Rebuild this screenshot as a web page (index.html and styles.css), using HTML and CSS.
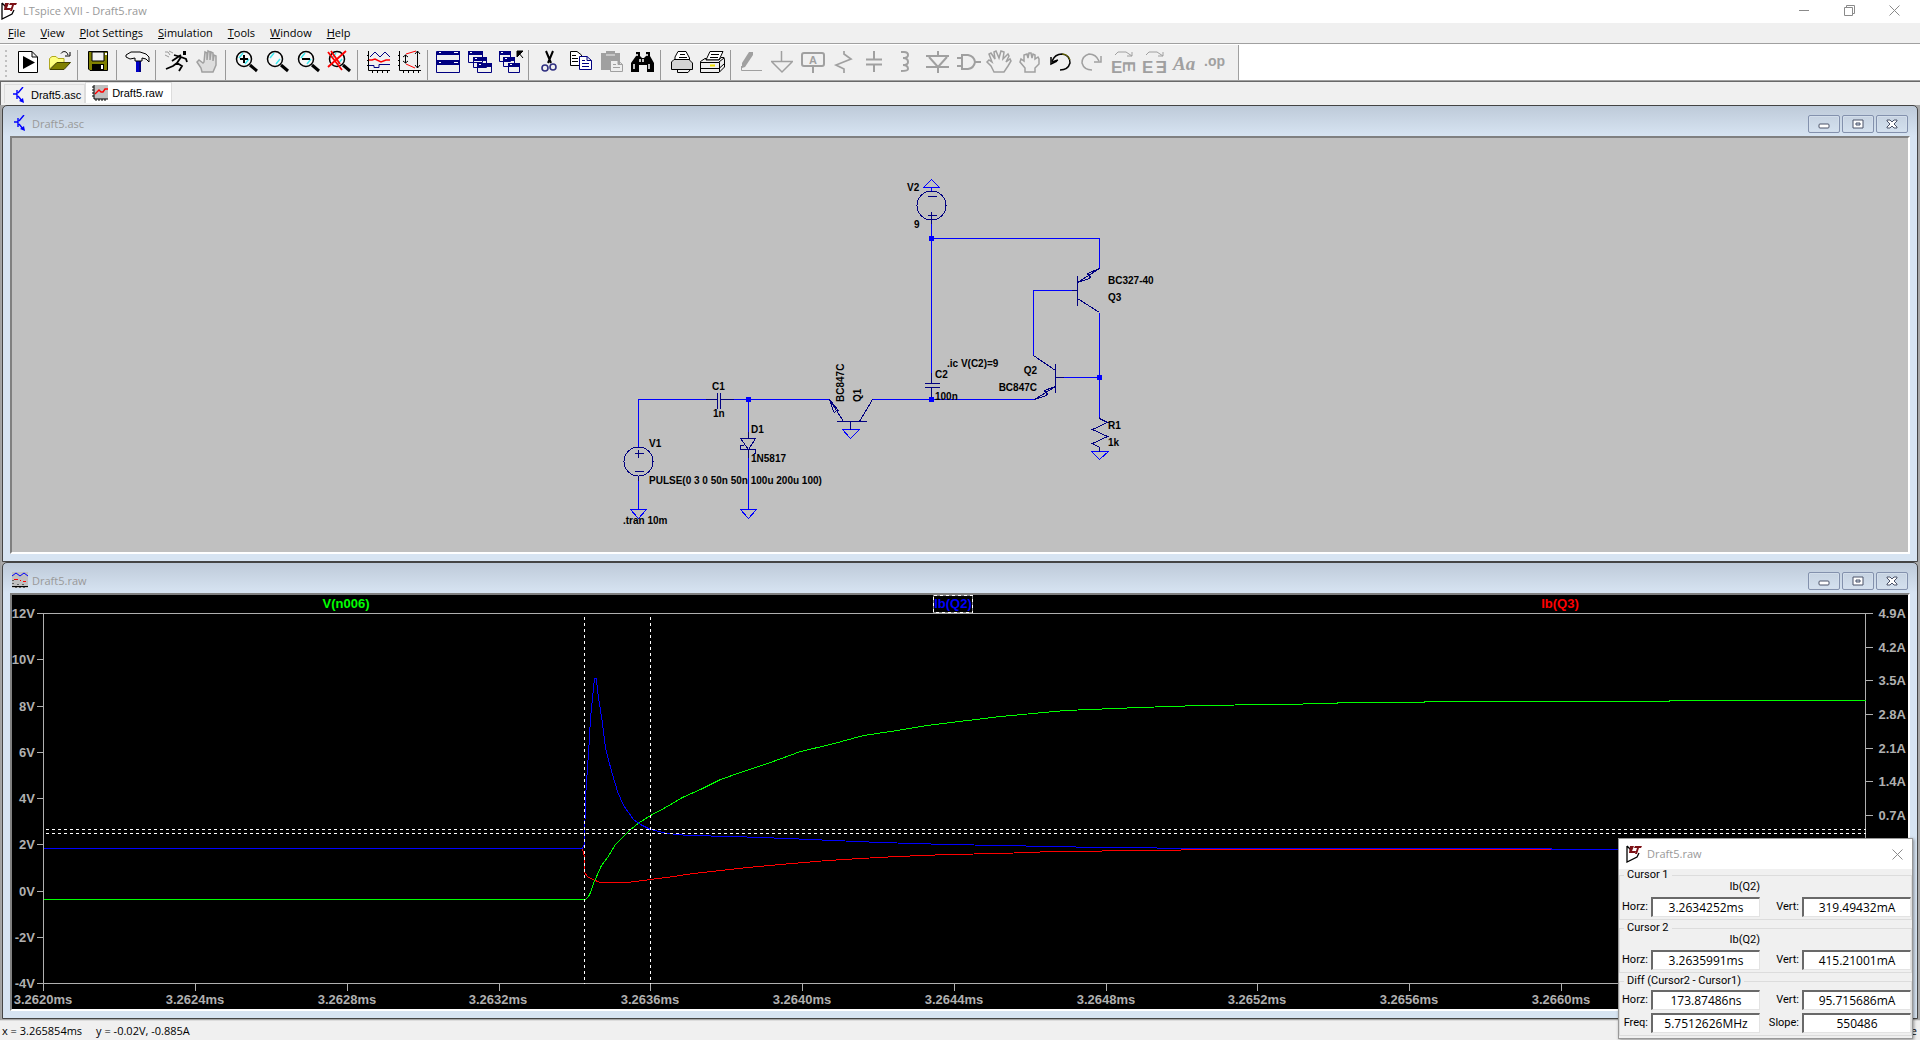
FILE: index.html
```html
<!DOCTYPE html>
<html lang="en">
  <head>
    <meta charset="utf-8" />
    <title>LTspice XVII - Draft5.raw</title>
    <link rel="stylesheet" href="styles.css">
  </head>

  <body>
    <svg class="defs" width="0" height="0" aria-hidden="true">
      <symbol id="logo" viewBox="0 0 16 18">
        <path d="M1 1V17L11 12L13 8M1 1L5 5" fill="none" stroke="#000" stroke-width="1.3" />
        <path d="M4 1H8L6 6H10L9 8H3ZM9 1H16L15 3H13L11 9H9L11 3H8Z" fill="#7b1015" />
      </symbol>
      <symbol id="npn" viewBox="0 0 16 16">
        <path d="M2 7H6M6 3V12M7 6L12 0M7 9L11 14" fill="none" stroke="#00f" stroke-width="1.4" />
        <path d="M13 16L8 14L12 11Z" fill="#00f" />
      </symbol>
      <symbol id="wave" viewBox="0 0 16 16">
        <path d="M2 0H16V14H2Z" fill="#c0c0c0" />
        <path d="M2 0V14H16M0 2H2M0 5H2M0 8H2M0 11H2M4 14V16M7 14V16M10 14V16M13 14V16" fill="none" stroke="#000" />
        <path d="M3 9L7 5L9 7H11L13 4H16" fill="none" stroke="red" stroke-width="1.4" />
      </symbol>
      <symbol id="waves" viewBox="0 0 16 16">
        <path d="M0 0H16V16H0Z" fill="#c0c0c0" />
        <path d="M0 4L4 1L8 4L12 1L16 4" fill="none" stroke="#00f" />
        <path d="M2 7.500H6M8 8.500H9M11 9.500H14" stroke="red" />
        <path d="M0 14.500H16M4 14V16M8 14V16M12 14V16M1 8V9M1 11V12M6 12V13M11 12V13" stroke="#000" />
      </symbol>
      <symbol id="lens" viewBox="0 0 24 24">
        <circle cx="9" cy="9" r="7.500" fill="#f8f8f8" stroke="#000" stroke-width="1.500" />
        <path d="M4 8L8 3M10 14L14 9" stroke="#3fe8f0" stroke-width="1.500" />
        <path d="M15 15L22 21" stroke="#000" stroke-width="3" />
      </symbol>
      <symbol id="min" viewBox="0 0 12 10">
        <rect x="1" y="5" width="10" height="4" rx="1" fill="#fff" stroke="#4b5268" />
      </symbol>
      <symbol id="max" viewBox="0 0 12 10">
        <path d="M1 1H11V9H1ZM4 4V6H8V4Z" fill="#fff" fill-rule="evenodd" stroke="#4b5268" />
      </symbol>
      <symbol id="cross" viewBox="0 0 12 10">
        <path d="M1 1H4L6 3L8 1H11V2L8 5L11 8V9H8L6 7L4 9H1V8L4 5L1 2Z" fill="#fff" stroke="#4b5268" />
      </symbol>
      <symbol id="x" viewBox="0 0 11 11">
        <path d="M.5.5L10.500 10.500M10.500.5L.5 10.500" stroke="#8a8a8a" fill="none" />
      </symbol>
    </svg>

    <header class="titlebar">
      <svg class="logo"><use href="#logo" /></svg>
      <h1>LTspice XVII - Draft5.raw</h1>
      <div class="syscmds">
        <button aria-label="Minimize"><svg width="11" height="11"><path d="M0 5.500H10" stroke="#8a8a8a" /></svg></button>
        <button aria-label="Restore"><svg width="11" height="11"><path d="M.5 2.500H8.500V10.500H.5ZM2.500 2V.5H10.500V8.500H9" stroke="#8a8a8a" fill="none" /></svg></button>
        <button aria-label="Close"><svg width="11" height="11"><use href="#x" /></svg></button>
      </div>
    </header>

    <nav class="menubar">
      <a href="#"><u>F</u>ile</a>
      <a href="#"><u>V</u>iew</a>
      <a href="#"><u>P</u>lot Settings</a>
      <a href="#"><u>S</u>imulation</a>
      <a href="#"><u>T</u>ools</a>
      <a href="#"><u>W</u>indow</a>
      <a href="#"><u>H</u>elp</a>
    </nav>

    <div class="rebar">
      <div class="toolbar">
        <button class="tool" aria-label="Run"><svg viewBox="0 0 24 24"><path d="M1.500 1.500H15L20.500 7V22.500H1.500ZM15 1.500V7H20.500" fill="#fff" stroke="#000" /><path d="M6 6L18 12.500L6 19Z" /></svg></button>
        <button class="tool" aria-label="Open"><svg viewBox="0 0 24 24"><path d="M1.500 19V8.500L4 6.500H8L10 8.500H16V13H8Z" fill="#ffff80" stroke="#b0a820" /><path d="M2 19.500L9 12.500H22.500L16 19.500Z" fill="#808000" stroke="#404000" /><path d="M13 3.500C15 .5 19 1 20 5M22 2V6H17" fill="none" stroke="#000" /></svg></button>
        <span class="sep"></span>
        <button class="tool" aria-label="Save"><svg viewBox="0 0 24 24"><path d="M1.500 1.500H20.500V20.500H3L1.500 19Z" fill="#808000" stroke="#000" /><path d="M5 2H17V11H5Z" fill="#f0f0f0" stroke="#000" /><path d="M5 14H17V20H5Z" /><path d="M14 15H16V19H14ZM18 3H20V5H18Z" fill="#fff" /></svg></button>
        <span class="sep"></span>
        <button class="tool" aria-label="Control panel"><svg viewBox="0 0 24 24"><path d="M10 10H15V22H10Z" fill="#0000c8" /><path d="M14 10V22" stroke="#000080" stroke-width="2" /><path d="M0 5L5 2H14L20 4L23 7V12L20 9L16 8V11H9V8L4 9L0 7Z" fill="#f4f4f4" stroke="#000" /></svg></button>
        <span class="sep"></span>
        <button class="tool" aria-label="Simulate"><svg viewBox="0 0 24 24"><path d="M18 1H21V5H18Z" /><path d="M9 5L16 7L21 9L22 12M16 7L12 13L17 16L14 21M12 13L8 16L1 19M16 5L10 9L7 11" fill="none" stroke="#000" stroke-width="1.800" /><path d="M0 2H3L5 5M4 1L8 3M0 5L4 7" fill="none" stroke="#999" /></svg></button>
        <button class="tool" aria-label="Halt"><svg viewBox="0 0 24 24"><path d="M6 22H17L20 15V6L18 5L17 11V3L15 2L14 10V2L12 1L11 10V3L9 2L8 12L7 13L3 10L1 12L5 18Z" fill="#ddd" stroke="#a0a0a0" stroke-width="1.500" /></svg></button>
        <span class="sep"></span>
        <button class="tool" aria-label="Zoom in"><svg viewBox="0 0 24 24"><use href="#lens" /><path d="M5 9H13M9 5V13" stroke="#000" stroke-width="2" /></svg></button>
        <button class="tool" aria-label="Pan"><svg viewBox="0 0 24 24"><use href="#lens" /></svg></button>
        <button class="tool" aria-label="Zoom out"><svg viewBox="0 0 24 24"><use href="#lens" /><path d="M5 9H13" stroke="#000" stroke-width="2" /></svg></button>
        <button class="tool" aria-label="Zoom full extents"><svg viewBox="0 0 24 24"><use href="#lens" /><path d="M0 2L14 20M18 1L0 17M3 1L12 14" fill="none" stroke="red" stroke-width="1.800" /></svg></button>
        <span class="sep"></span>
        <button class="tool" aria-label="Autorange"><svg viewBox="0 0 24 24"><path d="M1.500 1V20.500H23M0 5.500H1M0 10.500H1M0 15.500H1M5.500 21V23M10.500 21V23M15.500 21V23M20.500 21V23" fill="none" stroke="#000" /><path d="M3 7L8 2L13 7L18 2L23 7M2 15.500H7V17.500H12V14.500H23" fill="none" stroke="#000080" /><path d="M2 10H5L8 9L14 12L19 10H23" fill="none" stroke="red" stroke-width="1.500" /></svg></button>
        <button class="tool" aria-label="Plot limits"><svg viewBox="0 0 24 24"><path d="M1.500 1V20.500H23M0 5.500H1M0 10.500H1M0 15.500H1M5.500 21V23M10.500 21V23M15.500 21V23M20.500 21V23M7.500 5V13M5 7L7.500 5L10 7M5 11L7.500 13L10 11M19.500 1V18M17 4L19.500 1L22 4M17 15L19.500 18L22 15" fill="none" stroke="#000" /><path d="M8 4L18 1M8 14L17 18" stroke="red" /></svg></button>
        <span class="sep"></span>
        <button class="tool" aria-label="Tile windows"><svg viewBox="0 0 24 24"><path d="M-.5 1.500H22.500V22.500H-.5Z" fill="#f0f0f0" stroke="#000080" /><path d="M0 1H23V5H0ZM0 11H23V15H0Z" fill="#000080" /><path d="M0 10.500H22" stroke="#000080" /><path d="M2 2.500H4M17 2.500H21M2 12.500H4M17 12.500H21" stroke="#fff" /></svg></button>
        <button class="tool" aria-label="Cascade windows"><svg viewBox="0 0 24 24"><g fill="#f0f0f0" stroke="#000080"><path d="M.5 1.500H14.500V12.500H.5ZM5.500 8.500H18.500V17.500H5.500ZM9.500 13.500H23.500V22.500H9.500Z" /></g><path d="M0 1H15V5H0ZM5 7H19V11H5ZM9 13H24V17H9Z" fill="#000080" /><path d="M2 2.500H4M7 8.500H9M11 14.500H13" stroke="#fff" /></svg></button>
        <button class="tool" aria-label="Close all windows"><svg viewBox="0 0 24 24"><g fill="#f0f0f0" stroke="#000080"><path d="M.5 1.500H11.500V11.500H.5ZM4.500 7.500H15.500V16.500H4.500ZM9.500 13.500H20.500V22.500H9.500Z" /></g><path d="M0 1H12V5H0ZM4 7H16V11H4ZM9 13H21V17H9Z" fill="#000080" /><path d="M2 2.500H4M6 8.500H8M11 14.500H13" stroke="#fff" /><path d="M18 7V1H24ZM19 2L24 8" stroke="#000" /></svg></button>
        <span class="sep"></span>
        <button class="tool" aria-label="Cut"><svg viewBox="0 0 24 24"><path d="M8 1L13 13M15 1L10 13" stroke="#000" stroke-width="2" /><circle cx="7" cy="18" r="3" fill="none" stroke="#303080" stroke-width="1.600" /><circle cx="15" cy="17" r="3" fill="none" stroke="#303080" stroke-width="1.600" /></svg></button>
        <button class="tool" aria-label="Copy"><svg viewBox="0 0 24 24"><path d="M1.500 1.500H8L12.500 5V15.500H1.500Z" fill="#fff" stroke="#000" /><path d="M3 5.500H7M3 8.500H9M3 11.500H9" stroke="#000" /><path d="M10.500 6.500H18L22.500 10.500V19.500H10.500ZM18 6.500V10.500H22.500" fill="#fff" stroke="#000080" /><path d="M13 10.500H16M13 13.500H20M13 16.500H20" stroke="#000080" /></svg></button>
        <button class="tool" aria-label="Paste"><svg viewBox="0 0 24 24"><path d="M1 3H6V1H15V3H20V20H1Z" fill="#a0a0a0" /><path d="M6 5H15" stroke="#eee" /><path d="M10.500 10.500H18L22.500 14.500V21.500H10.500ZM18 10.500V14.500H22.500M13 14.500H16M13 17.500H20" fill="#eee" stroke="#a0a0a0" /></svg></button>
        <button class="tool" aria-label="Find"><svg viewBox="0 0 24 24"><path d="M5 2H9V6L11 8H13L15 6V2H19V6L23 13V22H16V15H8V22H0V13L5 6Z" /><path d="M6 4V6M16 4V6M3 14V19M18 14V19M9 9V12M12 9V12" stroke="#fff" stroke-width="1.500" /></svg></button>
        <span class="sep"></span>
        <button class="tool" aria-label="Print"><svg viewBox="0 0 24 24"><path d="M5 9V7L8 1.500H16L19.500 8V10" fill="#fff" stroke="#000" /><path d="M4 9.500H19L22.500 13V19.500H1.500V12Z" fill="#d4d4d4" stroke="#000" /><path d="M7.500 20V22.500H18L20 20M10 4.500H15M9 7.500H17" fill="none" stroke="#000" /></svg></button>
        <button class="tool" aria-label="Print setup"><svg viewBox="0 0 24 24"><path d="M5 10L9 1.500H22L18 10Z" fill="#fff" stroke="#000" /><path d="M10 4.500H18M9 7.500H17" stroke="#000" /><path d="M-.5 11.500L4 8.500H5V10H18L20 7.500H23L23.500 10V17L18 22.500H-.5ZM-.5 12.500H18.500V22M18 12L23 8M0 18.500H18L23 14" fill="#eee" stroke="#000" /><path d="M9 15.500H14" stroke="#f0e000" stroke-width="2" /></svg></button>
        <span class="sep"></span>
        <button class="tool" aria-label="Wire" disabled><svg viewBox="0 0 24 24"><path d="M9 2H13V5L5 17L2 18V13Z" fill="#a0a0a0" /><path d="M1.500 16V20.500H22" class="line" /></svg></button>
        <button class="tool" aria-label="Ground" disabled><svg viewBox="0 0 24 24"><path d="M10.500 1V11M0 11.500H22M1 12L11 22L21 12" class="line" stroke-width="1.500" /></svg></button>
        <button class="tool" aria-label="Label net" disabled><svg viewBox="0 0 24 24"><rect x="0" y="3" width="22" height="13" rx="2" class="line" stroke-width="2" /><path d="M11 17V23" class="line" stroke-width="2" /><text x="7" y="14" class="sans" font-size="11">A</text></svg></button>
        <button class="tool" aria-label="Resistor" disabled><svg viewBox="0 0 24 24"><path d="M11 1V4L18 9L3 15L11 19V23" class="line" stroke-width="1.700" /></svg></button>
        <button class="tool" aria-label="Capacitor" disabled><svg viewBox="0 0 24 24"><path d="M10 1V9M10 15V22M2 9.500H18M2 14.500H18" class="line" stroke-width="2" /></svg></button>
        <button class="tool" aria-label="Inductor" disabled><svg viewBox="0 0 24 24"><path d="M6 2H9Q13 2 13 5Q13 8 8 8Q13 8 13 12Q13 15 8 15Q13 15 13 19Q13 21 6 21" class="line" stroke-width="2" /></svg></button>
        <button class="tool" aria-label="Diode" disabled><svg viewBox="0 0 24 24"><path d="M12 1V6M0 6H23M3 7L12 17L21 7M0 17H23M12 17V23" class="line" stroke-width="2" /></svg></button>
        <button class="tool" aria-label="Component" disabled><svg viewBox="0 0 24 24"><path d="M5 5H11Q17 6 18 12Q17 18 11 19H5ZM0 8H5M0 16H5M18 12H24" class="line" stroke-width="2" /></svg></button>
        <button class="tool" aria-label="Move" disabled><svg viewBox="0 0 24 24"><path d="M6 22L3 16L-1 12L1 10L4 12L1 4L3 3L7 9L6 2L8 1L11 8L13 1L16 2L15 9L20 4L21 6L18 12L22 9L23 11L20 16L16 22Z" class="line" stroke-width="1.500" /></svg></button>
        <button class="tool" aria-label="Drag" disabled><svg viewBox="0 0 24 24"><path d="M6 22V18L1 12L2 9L5 11V5L8 4L9 8L10 3H12L13 8L14 4L16 5V9L19 7L20 9V14L16 18V22Z" class="line" stroke-width="1.500" /></svg></button>
        <button class="tool" aria-label="Undo"><svg viewBox="0 0 24 24"><path d="M2 11Q5 4 12 4Q20 5 20 13Q18 20 10 20" fill="none" stroke="#000" stroke-width="1.500" /><path d="M12 4Q18 4 20 10" fill="none" stroke="#808000" /><path d="M1 7V14L7 11M2 12L8 10" fill="none" stroke="#000" stroke-width="1.500" /></svg></button>
        <button class="tool" aria-label="Redo" disabled><svg viewBox="0 0 24 24"><path d="M18 11Q15 4 8 4Q1 6 1 13Q3 20 11 20M20 6V12H13" class="line" stroke-width="1.500" /></svg></button>
        <button class="tool" aria-label="Rotate" disabled><svg viewBox="0 0 24 24"><path d="M3 5L6 2H14L20 6M20 2V6H15" class="line" /><text x="-1" y="23" class="sans" font-size="17">E</text><text class="sans" font-size="17" transform="translate(11 11) rotate(90)">E</text></svg></button>
        <button class="tool" aria-label="Mirror" disabled><svg viewBox="0 0 24 24"><path d="M3 5L6 2H14L20 6M20 2V6H15" class="line" /><text x="-1" y="23" class="sans" font-size="17">E</text><text class="sans" font-size="17" transform="translate(24 11) rotate(180)">E</text></svg></button>
        <button class="tool" aria-label="Text" disabled><svg viewBox="0 0 24 24"><text x="-1" y="20" class="serif" font-size="19">Aa</text></svg></button>
        <button class="tool" aria-label="SPICE directive" disabled><svg viewBox="0 0 24 24"><text x="-1" y="16" class="sans" font-size="14">.op</text></svg></button>
      </div>
    </div>

    <div class="tabs">
      <button class="tab"><svg><use href="#npn" /></svg>Draft5.asc</button>
      <button class="tab active"><svg><use href="#wave" /></svg>Draft5.raw</button>
    </div>

    <main class="mdi">
      <section class="child">
        <header>
          <svg class="doc"><use href="#npn" /></svg>
          <h2>Draft5.asc</h2>
          <button aria-label="Minimize Draft5.asc"><svg><use href="#min" /></svg></button>
          <button aria-label="Maximize Draft5.asc"><svg><use href="#max" /></svg></button>
          <button aria-label="Close Draft5.asc"><svg><use href="#cross" /></svg></button>
        </header>
        <div class="view">
          <svg class="schematic" viewBox="12 138 1896 414">
            <g transform="translate(.5 .5)" fill="none" shape-rendering="crispEdges">
              <!-- wires and grounds -->
              <g stroke="#00f">
                <path d="M638 447V399H717M720 399H828M872 399H1034M748 399V438M748 449V509M638 476V509M931 223V383M931 238H1099V268M1077 290H1033V355M1055 377H1099M1099 312V417M850 421V429M931 187V191" />
                <path d="M630 509H646L638 518ZM740 509H756L748 518ZM842 429H859L850 438ZM923 187H939L931 179ZM1091 451H1108L1099 459Z" />
              </g>
              <!-- parts -->
              <g stroke="#000080">
                <circle cx="638" cy="461" r="14.500" />
                <path d="M634 453H643M638 449V457M634 471H643M638 476V480" />
                <path d="M705 399H717M717 392V408M720 392V408M720 399H733" />
                <path d="M740 438H755L748 449ZM743 445H740V449H755V453H753M748 431V438M748 449V457" />
                <path d="M836 421H866M850 421V429M829 399L843 421M859 421L872 399M829 399L838 410L836 410L834 412L833 411Z" />
                <circle cx="931" cy="205" r="14.500" />
                <path d="M927 196H936M927 215H936M931 211V223" />
                <path d="M924 383H939M924 387H939M931 372V383M931 387V397" />
                <path d="M1077 275V305M1071 290H1077M1099 268L1077 282L1089 278L1090 276L1088 275L1087 273ZM1077 298L1099 312" />
                <path d="M1055 363V392M1055 377H1063M1033 355L1055 370M1055 386L1034 399L1046 395L1047 393L1045 392L1044 390Z" />
                <path d="M1099 416V418L1107 422L1092 429L1107 436L1092 443L1099 447V451" />
              </g>
              <path d="M746 397h4v4h-4zM929 236h4v4h-4zM929 397h4v4h-4zM1097 375h4v4h-4z" fill="#00f" stroke="#00f" />
            </g>
            <text x="649" y="447">V1</text>
            <text x="649" y="484">PULSE(0 3 0 50n 50n 100u 200u 100)</text>
            <text x="623" y="524">.tran 10m</text>
            <text x="712" y="390">C1</text>
            <text x="713" y="417">1n</text>
            <text x="751" y="433">D1</text>
            <text x="751" y="462">1N5817</text>
            <text transform="translate(844 402) rotate(-90)">BC847C</text>
            <text transform="translate(861 402) rotate(-90)">Q1</text>
            <text x="907" y="191">V2</text>
            <text x="914" y="228">9</text>
            <text x="947" y="367">.ic V(C2)=9</text>
            <text x="935" y="378">C2</text>
            <text x="935" y="400">100n</text>
            <text x="1037" y="374" text-anchor="end">Q2</text>
            <text x="1037" y="391" text-anchor="end">BC847C</text>
            <text x="1108" y="284">BC327-40</text>
            <text x="1108" y="301">Q3</text>
            <text x="1108" y="429">R1</text>
            <text x="1108" y="446">1k</text>
          </svg>
        </div>
      </section>

      <section class="child">
        <header>
          <svg class="doc"><use href="#waves" /></svg>
          <h2>Draft5.raw</h2>
          <button aria-label="Minimize Draft5.raw"><svg><use href="#min" /></svg></button>
          <button aria-label="Maximize Draft5.raw"><svg><use href="#max" /></svg></button>
          <button aria-label="Close Draft5.raw"><svg><use href="#cross" /></svg></button>
        </header>
        <div class="view">
          <svg class="plot" viewBox="12 595 1896 414">
            <g transform="translate(.5 .5)" fill="none" shape-rendering="crispEdges">
              <g stroke="#b0b0b0">
                <path d="M43 613H1865V983H43Z" />
                <path d="M36 613H43M36 659H43M36 706H43M36 752H43M36 798H43M36 844H43M36 891H43M36 937H43M36 983H43" />
                <path d="M1865 613H1872M1865 647H1872M1865 680H1872M1865 714H1872M1865 748H1872M1865 781H1872M1865 815H1872" />
                <path d="M43 983V990M195 983V990M347 983V990M499 983V990M650 983V990M802 983V990M954 983V990M1106 983V990M1257 983V990M1409 983V990M1561 983V990" />
              </g>
              <path stroke="red" d="M582 848L584 857V872L587 876L592 879L600 882H627L650 879L673 876L693 873L720 870L747 867L780 864L827 860L860 858L897 856L947 854L1000 853L1053 851L1150 850L1212 849H1551" />
              <path stroke="#0f0" d="M43 899H585L588 896L590 892L593 883L601 865L607 857L615 844L623 836L630 829L639 822L650 815L665 807L682 797L700 789L720 779L740 772L770 762L800 751L830 744L863 735L897 730L927 725L967 720L1000 716L1065 710L1139 707L1200 705L1337 703V702H1424V701H1669V700H1865" />
              <path stroke="#00f" d="M43 848H582L584 843L585 797L587 767L589 737L590 717L592 698L594 678H596L597 690L600 710L602 723L605 747L610 767L617 791L623 805L633 819L640 824L650 829L667 833L687 835L733 836L787 838L833 840L880 842L947 844L1000 845L1100 847L1212 848H1551V849H1640" />
              <path stroke="#fff" stroke-dasharray="3 3" d="M584 616V983M650 616V983M45 829H1865M45 833H1865" />
              <path stroke="#808080" d="M933 595H972V612H933Z" />
              <path stroke="#fff" stroke-dasharray="3 3" d="M933 595H972V612H933Z" />
            </g>
            <g text-anchor="middle">
              <text x="346" y="608" fill="#0f0">V(n006)</text>
              <text x="953" y="608" fill="#00f">Ib(Q2)</text>
              <text x="1560" y="608" fill="red">Ib(Q3)</text>
            </g>
            <g class="axis" text-anchor="end">
              <text x="35" y="618">12V</text>
              <text x="35" y="664">10V</text>
              <text x="35" y="711">8V</text>
              <text x="35" y="757">6V</text>
              <text x="35" y="803">4V</text>
              <text x="35" y="849">2V</text>
              <text x="35" y="896">0V</text>
              <text x="35" y="942">-2V</text>
              <text x="35" y="988">-4V</text>
              <text x="1906" y="618">4.9A</text>
              <text x="1906" y="652">4.2A</text>
              <text x="1906" y="685">3.5A</text>
              <text x="1906" y="719">2.8A</text>
              <text x="1906" y="753">2.1A</text>
              <text x="1906" y="786">1.4A</text>
              <text x="1906" y="820">0.7A</text>
            </g>
            <g class="axis" text-anchor="middle">
              <text x="43" y="1004">3.2620ms</text>
              <text x="195" y="1004">3.2624ms</text>
              <text x="347" y="1004">3.2628ms</text>
              <text x="498" y="1004">3.2632ms</text>
              <text x="650" y="1004">3.2636ms</text>
              <text x="802" y="1004">3.2640ms</text>
              <text x="954" y="1004">3.2644ms</text>
              <text x="1106" y="1004">3.2648ms</text>
              <text x="1257" y="1004">3.2652ms</text>
              <text x="1409" y="1004">3.2656ms</text>
              <text x="1561" y="1004">3.2660ms</text>
            </g>
          </svg>
        </div>
      </section>
    </main>

    <footer class="status">
      <span>x = 3.265854ms</span>
      <span>y = -0.02V, -0.885A</span>
      <span class="hint">e</span>
    </footer>

    <form class="cursors">
      <header>
        <svg class="logo"><use href="#logo" /></svg>
        <h2>Draft5.raw</h2>
        <button type="button" aria-label="Close cursors"><svg width="11" height="11"><use href="#x" /></svg></button>
      </header>
      <fieldset>
        <legend>Cursor 1</legend>
        <div class="fields">
          <span class="trace">Ib(Q2)</span>
          <label for="h1">Horz:</label><input id="h1" value="3.2634252ms">
          <label for="v1">Vert:</label><input id="v1" value="319.49432mA">
        </div>
      </fieldset>
      <fieldset>
        <legend>Cursor 2</legend>
        <div class="fields">
          <span class="trace">Ib(Q2)</span>
          <label for="h2">Horz:</label><input id="h2" value="3.2635991ms">
          <label for="v2">Vert:</label><input id="v2" value="415.21001mA">
        </div>
      </fieldset>
      <fieldset>
        <legend>Diff (Cursor2 - Cursor1)</legend>
        <div class="fields diff">
          <label for="hd">Horz:</label><input id="hd" value="173.87486ns">
          <label for="vd">Vert:</label><input id="vd" value="95.715686mA">
          <label for="freq">Freq:</label><input id="freq" value="5.7512626MHz">
          <label for="slope">Slope:</label><input id="slope" value="550486">
        </div>
      </fieldset>
    </form>
  </body>
</html>
```
FILE: styles.css
```css
* {
  box-sizing: border-box;
}

body {
  margin: 0;
  min-height: 100vh;
  display: flex;
  flex-direction: column;
  position: relative;
  overflow: hidden;
  background: #f0f0f0;
  color: #000;
  font: 11px/16px "Open Sans", "Noto Sans", sans-serif;
}

h1,
h2 {
  margin: 0;
  font-size: 11px;
  font-weight: normal;
  color: #999;
}

button {
  padding: 0;
  border: 0;
  background: none;
  font: inherit;
}

svg {
  display: block;
  flex: none;
}

.defs {
  position: absolute;
}

.logo {
  width: 16px;
  height: 18px;
}

/* main title bar */
.titlebar {
  display: flex;
  align-items: center;
  gap: 6px;
  height: 23px;
  padding: 0 20px 2px 1px;
  background: #fff;
}

.titlebar h1 {
  flex: 1;
}

.syscmds {
  display: flex;
  gap: 34px;
}

.menubar {
  display: flex;
  gap: 15px;
  height: 21px;
  padding: 2px 8px;
  border-bottom: 1px solid #a0a0a0;
}

.menubar a {
  color: #000;
  text-decoration: none;
}

/* toolbar */
.rebar {
  display: flex;
  height: 38px;
  background: #fff;
  border-bottom: 1px solid #696969;
  box-shadow: inset 0 -1px #a0a0a0;
}

.toolbar {
  display: flex;
  height: 35px;
  margin-top: 1px;
  padding: 5px 7px 0 13px;
  background: linear-gradient(#a0a0a0, #a0a0a0) right / 1px 100% no-repeat,
    repeating-linear-gradient(#c0c0c0 0 2px, #f0f0f0 2px 5px) 5px 5px / 2px 27px no-repeat, #f0f0f0;
}

.tool {
  width: 31px;
  height: 24px;
  padding: 0 3px 0 4px;
}

.tool svg {
  width: 24px;
  height: 24px;
  overflow: visible;
}

.tool .line {
  fill: none;
  stroke: #a0a0a0;
}

.tool text {
  fill: #a0a0a0;
  font-weight: bold;
}

.sans {
  font-family: "Liberation Sans", sans-serif;
}

.serif {
  font-family: "Liberation Serif", serif;
  font-style: italic;
}

.sep {
  width: 8px;
  background: linear-gradient(#999, #999) 2px 0 / 1px 100% no-repeat;
}

/* document tabs */
.tabs {
  display: flex;
  align-items: flex-end;
  height: 23px;
  padding: 0 3px 2px;
  border-left: 1px solid #696969;
}

.tab {
  display: flex;
  align-items: center;
  gap: 4px;
  height: 19px;
  padding: 1px 3px 0 6px;
  border: 1px solid #dcdcdc;
  border-bottom: 0;
  font: 11px/14px "Liberation Sans", sans-serif;
}

.tab svg {
  width: 16px;
  height: 16px;
}

.tab.active {
  height: 21px;
  padding: 0 8px 1px 6px;
  background: #fff;
}

/* child windows */
.mdi {
  padding: 0 2px 1px 1px;
  border-left: 1px solid #a0a0a0;
  background: #a8a8a8;
}

.child {
  border: 1px solid #444;
  border-radius: 5px 5px 0 0;
  padding: 0 7px 7px;
  background: linear-gradient(#becad9, #d7e4f2 30px);
}

.child header {
  display: flex;
  gap: 2px;
  height: 30px;
  padding: 9px 2px 0;
}

.child h2 {
  flex: 1;
  padding: 1px 0 0 2px;
}

.doc {
  width: 16px;
  height: 16px;
}

.child header button {
  display: grid;
  place-items: center;
  width: 32px;
  height: 18px;
  border: 1px solid #8391ad;
  border-radius: 2px;
  box-shadow: inset 0 0 0 1px #d3deeb;
}

.child header button svg {
  width: 12px;
  height: 10px;
}

.view {
  border: 2px solid #808080;
  border-right-color: #fff;
  border-bottom-color: #fff;
}

.view svg {
  width: 100%;
  height: auto;
}

.schematic {
  background: #c0c0c0;
  font: bold 10px "Liberation Sans", sans-serif;
}

.plot {
  background: #000;
  font: bold 13px "Liberation Sans", sans-serif;
}

.axis {
  fill: #b0b0b0;
}

.status {
  display: flex;
  flex: 1;
  gap: 14px;
  padding: 2px 3px 0 2px;
  border-top: 1px solid #dcdcdc;
}

.hint {
  margin-left: auto;
}

/* cursor readout, floats over the plot */
.cursors {
  position: absolute;
  right: 7px;
  bottom: 1px;
  width: 295px;
  border: 1px solid #999;
  background: #f0f0f0;
  box-shadow: 1px 1px 3px rgba(0, 0, 0, 0.4);
  font: 11px/12px Roboto, "Liberation Sans", sans-serif;
}

.cursors header {
  display: flex;
  align-items: center;
  gap: 5px;
  height: 30px;
  padding: 0 9px 0 7px;
  background: #fff;
}

.cursors h2 {
  flex: 1;
  font-family: "Open Sans", sans-serif;
}

.cursors fieldset {
  margin: 0 0 2px;
  padding: 0 0 2px;
  border: 1px solid #dcdcdc;
}

.cursors legend {
  margin-left: 4px;
  padding: 0 3px;
}

.fields {
  display: grid;
  grid-template-columns: 28px 109px 1fr 109px;
  gap: 3px;
  align-items: center;
  text-align: right;
}

.diff {
  padding-top: 3px;
}

.trace {
  grid-column: 1 / 3;
  padding-bottom: 1px;
}

.trace + label {
  grid-column: 1;
}

.fields input {
  width: 100%;
  height: 20px;
  padding: 0;
  border: 2px solid #696969;
  border-right: 1px solid #e3e3e3;
  border-bottom: 1px solid #e3e3e3;
  border-radius: 0;
  background: #fff;
  font: 12px "Open Sans", "Noto Sans", sans-serif;
  text-align: center;
}
```
